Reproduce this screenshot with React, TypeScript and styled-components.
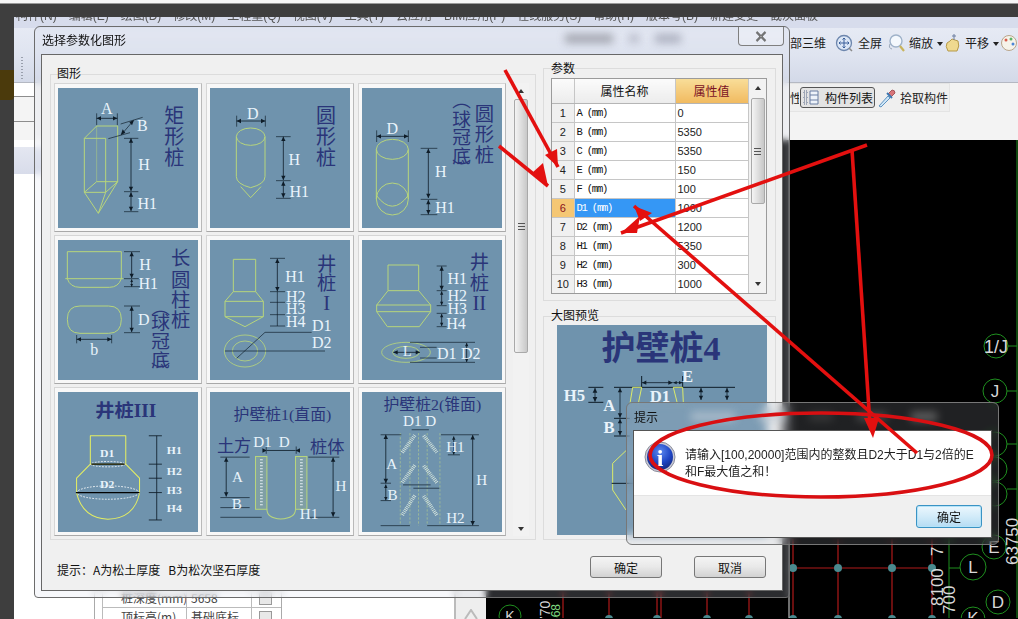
import React from "react";
import styled, { createGlobalStyle } from "styled-components";

const UI = `"Liberation Sans", "Noto Sans CJK SC", sans-serif`;
const CJK = `"Noto Sans CJK SC", sans-serif`;
const SERIF = `"Liberation Serif", "Noto Sans CJK SC", serif`;
const LINE = "#b7d57c";
const DIM = "#0e1c28";
const LABEL = "#e9f3fb";
const INK = "#2a3579";

const Global = createGlobalStyle`
  html, body { margin: 0; padding: 0; background: #3e3e3e; }
  body { font: 12px ${UI}; color: #111; }
  * { box-sizing: border-box; }
`;

const Page = styled.div`position: relative; width: 1018px; height: 619px; overflow: hidden; background: #3e3e3e;`;
const TopStrip = styled.div`height: 4px; background: #f6f6f6; border-bottom: 1px solid #999;`;
const Badge = styled.div`position: absolute; left: 0; top: 70px; width: 14px; height: 30px; background: #4b3a0c; border-radius: 0 0 4px 0;`;

const AppWindow = styled.div`position: absolute; left: 14px; top: 17px; width: 1004px; height: 602px; display: flex; flex-direction: column; background: #f0f0f0;`;
const MenuBar = styled.div`height: 11px; overflow: hidden; background: #d7dcec; display: flex; gap: 12px; padding-left: 2px; flex: none;`;
const MenuItem = styled.span`line-height: 18px; margin-top: -10px; color: #555; white-space: nowrap; filter: blur(0.5px);`;
const Ribbon = styled.div`height: 55px; flex: none; display: flex; align-items: flex-start; padding: 5px 0 0 7px; background: linear-gradient(#e6eaf4, #dfe4f0 50%, #d3d9e8); border-bottom: 1px solid #b4b8c2;`;
const RibbonGrip = styled.span`width: 2px; height: 24px; margin: 24px 767px 0 0; flex: none; background: repeating-linear-gradient(#9aa0ad 0 1px, transparent 1px 3px);`;
const RibbonText = styled.span<{ $gap?: number }>`font-size: 12px; line-height: 20px; color: #1b1b1b; white-space: nowrap; font-family: ${CJK}; margin-left: ${(p) => p.$gap ?? 0}px;`;
const RibbonDivider = styled.span`width: 1px; height: 20px; background: #888; margin: 0 2px 0 7px;`;
const RibbonIcon = styled.span<{ $gap?: number }>`width: 20px; height: 20px; flex: none; display: flex; align-items: center; justify-content: center; margin-left: ${(p) => p.$gap ?? 0}px;`;
const Caret = styled.span`width: 0; height: 0; flex: none; border: 3.5px solid transparent; border-top: 4px solid #222; margin: 9px 0 0 4px;`;

const SubBar = styled.div`height: 57px; flex: none; background: #f3f3f3; display: flex; align-items: flex-start; justify-content: space-between;`;
const SideCap = styled.div`width: 20px; display: flex; flex-direction: column;`;
const SideRow = styled.div<{ $h: number }>`height: ${(p) => p.$h}px; border-bottom: 1px solid #8d8d8d; background: ${(p) => (p.$h < 20 ? "#fff" : "#f4f4f4")};`;
const ToolGroup = styled.div`height: 29px; width: 160px; margin-right: 68px; display: flex; align-items: center; background: #efefef; border: 1px solid #e4e4e4; border-left: 0;`;
const ClippedChar = styled.span`width: 9px; overflow: hidden; flex: none; font-size: 12px; font-family: ${CJK}; color: #222;`;
const PressedTool = styled.div`width: 75px; height: 21px; flex: none; margin-left: 1px; display: flex; align-items: center; gap: 5px; padding-left: 2px; border: 1px solid #555; border-radius: 3px; background: #e3e3e3; font-size: 12px; font-family: ${CJK}; white-space: nowrap;`;
const GroupText = styled.span`font-size: 12px; font-family: ${CJK}; white-space: nowrap; color: #222; margin-left: 3px;`;

const Workspace = styled.div`flex: 1; display: flex; min-height: 0;`;
const LeftPanel = styled.div`width: 472px; display: flex; background: linear-gradient(#e4e7f1, #d8dcea) no-repeat 0 7px / 100% 27px, #fff; justify-content: flex-end; align-items: flex-end; overflow: hidden;`;
const PropTable = styled.div`width: 188px; margin-right: 172px; border: 1px solid #aaa; border-bottom: 0; padding-left: 7px; display: grid; grid-template-columns: 84px 65px 30px; grid-auto-rows: 19px; margin-bottom: -8px; background: #fff;`;
const PropCell = styled.div`border-left: 1px solid #bbb; border-bottom: 1px solid #bbb; font-size: 12px; font-family: ${CJK}; padding-left: 4px; line-height: 18px; white-space: nowrap; overflow: hidden; color: #444;`;
const PropLabel = styled(PropCell)`padding-left: 18px;`;
const Check = styled.span`display: block; width: 13px; height: 13px; margin: 3px 3px; border: 1px solid #999; background: #e8e8e8;`;
const GreyStrip = styled.div`width: 32px; height: 100%; background: #eee; border-left: 2px solid #bbb; display: flex; align-items: flex-end; justify-content: center;`;
const Cad = styled.div`flex: 1; background: #000; overflow: hidden;`;

const Dialog = styled.div`position: absolute; left: 34px; top: 26px; width: 756px; height: 572px; display: flex; flex-direction: column; padding: 0 6px 6px 6px; border: 1px solid #6c6c6c; border-radius: 6px 6px 4px 4px; background: rgba(215, 220, 236, 0.2); backdrop-filter: blur(3px);`;
const TitleBar = styled.div`height: 27px; flex: none; display: flex; align-items: flex-start; font-family: ${CJK}; font-size: 12px; color: #111;`;
const TitleText = styled.span`line-height: 26px; margin-left: 1px;`;
const TitleBlurs = styled.div`display: flex; gap: 16px; margin: 7px 0 0 439px; align-items: center;`;
const Blur = styled.span<{ $w: number; $c: string }>`display: block; flex: none; width: ${(p) => p.$w}px; height: 9px; background: ${(p) => p.$c}; filter: blur(4px); opacity: 0.75;`;
const CloseBtn = styled.div`margin-left: auto; margin-right: -1px; width: 46px; height: 19px; border: 1px solid #7f7f7f; border-top: 0; border-radius: 0 0 4px 4px; display: flex; align-items: center; justify-content: center; background: rgba(255,255,255,.25);`;
const Panel = styled.div`flex: 1; background: #f0f0f0; border: 1px solid #676767; display: flex; flex-direction: column; padding: 19px 0 0 8px;`;
const PanelBody = styled.div`display: flex; gap: 7px; height: 466px;`;
const Group = styled.div<{ $w?: number; $pl: number; $grow?: boolean }>`width: ${(p) => p.$w ?? 233}px; border: 1px solid #dcdcdc; padding-left: ${(p) => p.$pl}px; ${(p) => (p.$grow ? "flex: 1;" : "padding-bottom: 6px;")}`;
const Legend = styled.div<{ $mb: number; $mt: number; $ml?: number }>`font-family: ${CJK}; font-size: 12px; line-height: 16px; height: 16px; margin: ${(p) => p.$mt}px 0 ${(p) => p.$mb}px ${(p) => p.$ml ?? 0}px; color: #111;`;
const GalleryRow = styled.div`display: flex; gap: 7px;`;
const Gallery = styled.div`display: grid; grid-template-columns: repeat(3, 148px); grid-auto-rows: 149px; gap: 3px 4px; width: 452px;`;
const Cell = styled.div`padding: 4px; background: #f8f8f8; border: 1px solid #d6d6d6; border-bottom-color: #a9a9a9; border-right-color: #b9b9b9; display: flex; align-items: center; justify-content: center;`;
const Art = styled.svg.attrs({ preserveAspectRatio: "none" })<{ $size: number }>`display: block; width: ${(p) => p.$size}px; height: ${(p) => p.$size}px; background: #6f93ad; flex: none;`;

const VScroll = styled.div<{ $w: number; $thumbTop: number; $thumbH: number }>`
  width: ${(p) => p.$w}px; flex: none; display: flex; flex-direction: column; align-items: center; background: #f2f2f2;
  .up, .down { height: ${(p) => p.$thumbTop}px; flex: none; display: flex; align-items: center; justify-content: center; }
  .track { flex: 1; }
  .thumb { height: ${(p) => p.$thumbH}px; width: 14px; border: 1px solid #a9a9a9; border-radius: 2px; background: linear-gradient(90deg, #f4f4f4, #dcdcdc 55%, #c8c8c8); display: flex; align-items: center; justify-content: center; }
`;
const Grip = styled.span`display: block; width: 7px; height: 7px; background: repeating-linear-gradient(#555 0 1px, transparent 1px 3px);`;
const Tri = styled.span<{ $down?: boolean }>`width: 0; height: 0; border: 3.5px solid transparent; ${(p) => (p.$down ? "border-top: 4px solid #333; margin-top: 4px;" : "border-bottom: 4px solid #333; margin-bottom: 4px;")}`;

const RightCol = styled.div`display: flex; flex-direction: column; gap: 15px; margin-top: -6px;`;
const ParamWrap = styled.div`width: 216px; height: 216px; border: 1px solid #9b9b9b; display: flex; overflow: hidden; background: #fff;`;
const ParamTable = styled.table`width: 196px; flex: none; border-collapse: collapse; table-layout: fixed;`;
const HeadCell = styled.th<{ $hot?: boolean; $w: number }>`
  width: ${(p) => p.$w}px; height: 24px; padding: 0; font: 400 12px ${CJK}; border-right: 1px solid #c6c6c6; border-bottom: 1px solid #b5b5b5;
  color: ${(p) => (p.$hot ? "#7a1124" : "#111")};
  background: ${(p) => (p.$hot ? "linear-gradient(#f8dd98, #f1ba60)" : "linear-gradient(#fbfbfb, #ececec)")};
`;
const IndexCell = styled.td<{ $on?: boolean }>`height: 19px; padding: 0; text-align: center; font: 11px "Liberation Sans", sans-serif; border-right: 1px solid #c6c6c6; border-bottom: 1px solid #c6c6c6; color: ${(p) => (p.$on ? "#8a1020" : "#222")}; background: ${(p) => (p.$on ? "#f5c774" : "#f0f0f0")};`;
const NameCell = styled.td<{ $on?: boolean }>`height: 19px; padding: 0 0 0 2px; font: 10.5px "Liberation Mono", monospace; letter-spacing: -1.2px; white-space: nowrap; border-right: 1px solid #c6c6c6; border-bottom: 1px solid #c6c6c6; color: ${(p) => (p.$on ? "#fff" : "#111")}; background: ${(p) => (p.$on ? "#3597f5" : "#fff")};`;
const ValueCell = styled.td`height: 19px; padding: 0 0 0 2px; font: 11px "Liberation Sans", sans-serif; border-right: 1px solid #c6c6c6; border-bottom: 1px solid #c6c6c6; color: #222;`;

const Footer = styled.div`display: flex; align-items: center; height: 22px; margin-top: 16px; padding: 0 16px 0 7px;`;
const Hint = styled.span`font-family: ${CJK}; font-size: 12px; white-space: pre; flex: 1; margin-top: 4px; color: #111;`;
const PushBtn = styled.div`width: 72px; height: 22px; margin-left: 32px; border: 1px solid #777; border-radius: 3px; background: linear-gradient(#f4f4f4, #e9e9e9 48%, #d2d2d2); display: flex; align-items: center; justify-content: center; font-family: ${CJK}; font-size: 12px; color: #111;`;

const MsgBox = styled.div`position: absolute; left: 626px; top: 402px; width: 373px; height: 143px; display: flex; flex-direction: column; padding: 0 6px 6px; border: 1px solid #777; border-radius: 6px; background: rgba(200, 205, 215, 0.16); backdrop-filter: blur(5px);`;
const MsgTitle = styled.div`height: 27px; flex: none; padding-left: 1px; display: flex; align-items: center; font-family: ${CJK}; font-size: 12px; color: #111;`;
const MsgBlurs = styled.div`display: flex; margin-left: 33px; gap: 24px; align-items: center;`;
const MsgInner = styled.div`flex: 1; border: 1px solid #555; display: flex; flex-direction: column; background: #f0f0f0;`;
const MsgContent = styled.div`height: 65px; flex: none; background: #fff; border-bottom: 1px solid #e4e4e4; display: flex; padding: 10px 12px 0 10px; gap: 9px;`;
const MsgText = styled.div`font-family: ${UI}; font-size: 12px; line-height: 17px; padding-top: 6px; color: #222; white-space: nowrap;`;
const MsgFooter = styled.div`flex: 1; display: flex; justify-content: flex-end; align-items: flex-start; padding: 9px 9px 0 0;`;
const OkBtn = styled.div`width: 66px; height: 23px; border: 1px solid #3a93c4; border-radius: 3px; box-shadow: inset 0 0 0 1px #b5e3f8; background: linear-gradient(#ecf7fd, #d2ebf9 50%, #b5dcf3); display: flex; align-items: center; justify-content: center; font-family: ${CJK}; font-size: 12px;`;
const Overlay = styled.svg`position: absolute; left: 0; top: 0; width: 1018px; height: 619px; pointer-events: none;`;
const CadSvg = styled.svg`display: block;`;
const InfoSvg = styled.svg`flex: none;`;

/* ---------- drawing helpers ---------- */
type DimP = { x1: number; y1: number; x2: number; y2: number; s?: number; inward?: boolean };
const Dim = ({ x1, y1, x2, y2, s = 13, inward }: DimP) => {
  const vert = x1 === x2;
  const w = s * 0.5;
  const head = (x: number, y: number, dir: number) =>
    vert
      ? `${x},${y} ${x - w},${y + dir * s} ${x + w},${y + dir * s}`
      : `${x},${y} ${x + dir * s},${y - w} ${x + dir * s},${y + w}`;
  const d = inward ? -1 : 1;
  return (
    <g>
      <line x1={x1} y1={y1} x2={x2} y2={y2} stroke={DIM} strokeWidth={2.4} />
      <polygon points={head(x1, y1, d)} fill={DIM} />
      <polygon points={head(x2, y2, -d)} fill={DIM} />
    </g>
  );
};
const Ticks = ({ d, c = DIM, w = 2 }: { d: string; c?: string; w?: number }) => <path d={d} stroke={c} strokeWidth={w} fill="none" />;
const Green = ({ d, c = LINE, w = 3, dash }: { d: string; c?: string; w?: number; dash?: string }) => <path d={d} stroke={c} strokeWidth={w} strokeDasharray={dash} fill="none" strokeLinejoin="round" />;
const L = ({ x, y, t, s = 48, bold }: { x: number; y: number; t: string; s?: number; bold?: boolean }) => (
  <text x={x} y={y} fontSize={s} fontFamily={SERIF} fill={LABEL} textAnchor="middle" fontWeight={bold ? 700 : 400}>{t}</text>
);
const V = ({ x, ys, chars, s = 60 }: { x: number; ys: number[]; chars: string[]; s?: number }) => (
  <g>
    {chars.map((c, i) => (
      <text key={i} x={x} y={ys[i]} fontSize={s} fontFamily={CJK} fontWeight={400} fill={INK} textAnchor="middle">{c}</text>
    ))}
  </g>
);
const H = ({ x, y, t, s = 48, bold }: { x: number; y: number; t: string; s?: number; bold?: boolean }) => (
  <text x={x} y={y} fontSize={s} fontFamily={SERIF} fontWeight={bold ? 700 : 400} fill={INK} textAnchor="middle">{t}</text>
);

const Pile1 = () => (
  <Art $size={140} viewBox="174 264 420 420">
    <Green d="M253 415H317V577H253ZM253 415L290 378H353V545L317 577M253 577L295 640L317 577M353 545L295 640M253 577L290 545H353" />
    <Green d="M290 378V545" w={1.5} />
    <Ticks d="M290 340V375M352 340V375M362 372L428 352M325 416L390 398M372 415H415M372 575H415M372 635H415" />
    <Dim x1={290} y1={355} x2={352} y2={355} />
    <line x1={400} y1={362} x2={365} y2={403} stroke={DIM} strokeWidth={2} />
    <polygon points="402,360 388,366 396,376" fill={DIM} />
    <polygon points="362,406 376,398 368,388" fill={DIM} />
    <Dim x1={393} y1={415} x2={393} y2={573} />
    <Dim x1={393} y1={577} x2={393} y2={633} />
    <L x={320} y={342} t="A" /><L x={427} y={394} t="B" /><L x={432} y={510} t="H" /><L x={442} y={627} t="H1" />
    <V x={523} ys={[368, 432, 496]} chars={["矩", "形", "桩"]} />
  </Art>
);
const Pile2 = () => (
  <Art $size={140} viewBox="630 264 420 420">
    <ellipse cx={752} cy={410} rx={43} ry={26} fill="none" stroke={LINE} strokeWidth={3} />
    <Green d="M709 410V530Q709 552 752 563Q795 552 795 530V410M722 560L752 593L783 560" />
    <Ticks d="M710 347V380M796 347V380M828 410H872M828 542H872M828 595H872" />
    <Dim x1={710} y1={363} x2={796} y2={363} />
    <Dim x1={850} y1={410} x2={850} y2={540} />
    <Dim x1={850} y1={544} x2={850} y2={593} />
    <L x={758} y={356} t="D" /><L x={883} y={494} t="H" /><L x={898} y={591} t="H1" />
    <V x={978} ys={[368, 432, 496]} chars={["圆", "形", "桩"]} />
  </Art>
);
const Pile3 = () => (
  <Art $size={140} viewBox="36 83 420 420">
    <ellipse cx={127} cy={267} rx={48} ry={30} fill="none" stroke={LINE} strokeWidth={3} />
    <ellipse cx={127} cy={416} rx={48} ry={48} fill="none" stroke={LINE} strokeWidth={3} />
    <Green d="M79 267V416M175 267V416M79 405Q127 470 175 405" />
    <Ticks d="M80 210V245M175 210V245M212 264H262M212 417H262M212 463H262" />
    <Dim x1={80} y1={228} x2={175} y2={228} />
    <Dim x1={235} y1={265} x2={235} y2={413} />
    <Dim x1={235} y1={419} x2={235} y2={462} />
    <L x={127} y={220} t="D" /><L x={272} y={351} t="H" /><L x={285} y={458} t="H1" />
    <V x={403} ys={[182, 243, 305]} chars={["圆", "形", "桩"]} s={58} />
    <V x={335} ys={[140, 198, 252, 308, 345]} chars={["︵", "球", "冠", "底", "︶"]} s={56} />
  </Art>
);
const Pile4 = () => (
  <Art $size={140} viewBox="24 30 420 420">
    <Green d="M52 65H214V146Q205 172 178 172H90Q60 172 52 146ZM46 146H220M90 228H176Q214 228 214 268Q214 310 176 310H90Q52 310 52 268Q52 228 90 228Z" />
    <Ticks d="M222 65H270M222 146H270M222 170H270M222 228H270M222 308H270M80 315V340M185 315V340" />
    <Dim x1={245} y1={66} x2={245} y2={144} />
    <Dim x1={245} y1={148} x2={245} y2={170} s={8} />
    <Dim x1={245} y1={229} x2={245} y2={306} />
    <Dim x1={80} y1={328} x2={185} y2={328} />
    <L x={285} y={121} t="H" /><L x={295} y={177} t="H1" /><L x={281} y={284} t="D" /><L x={133} y={374} t="b" />
    <V x={392} ys={[106, 170, 232, 292]} chars={["长", "圆", "柱", "桩"]} s={58} />
    <V x={332} ys={[252, 296, 354, 412, 445]} chars={["︵", "球", "冠", "底", "︶"]} s={56} />
  </Art>
);
const Pile5 = () => (
  <Art $size={140} viewBox="480 30 420 420">
    <Green d="M550 88H617V185H550ZM550 185L525 214V260L585 290L640 260V214L617 185M525 214H640M525 260H640" />
    <ellipse cx={585} cy={363} rx={62} ry={48} fill="none" stroke={LINE} strokeWidth={2.5} />
    <ellipse cx={585} cy={363} rx={38} ry={30} fill="none" stroke={LINE} strokeWidth={2.5} />
    <Ticks d="M560 385L645 307H785M525 363H825M660 85H705M660 185H705M660 217H705M660 254H705M660 288H705M682 185V288" />
    <Dim x1={682} y1={86} x2={682} y2={184} />
    <L x={735} y={156} t="H1" /><L x={737} y={216} t="H2" /><L x={737} y={253} t="H3" /><L x={737} y={291} t="H4" /><L x={815} y={304} t="D1" /><L x={815} y={354} t="D2" />
    <V x={830} ys={[122, 180]} chars={["井", "桩"]} s={58} />
    <H x={830} y={240} t="I" s={62} />
  </Art>
);
const Pile6 = () => (
  <Art $size={140} viewBox="936 30 420 420">
    <Green d="M1014 105H1106V182H1014ZM1014 182L980 225V245L1012 290H1108L1142 245V225L1106 182M980 225H1142M980 245H1142" />
    <ellipse cx={1068} cy={367} rx={73} ry={30} fill="none" stroke={LINE} strokeWidth={2.5} />
    <ellipse cx={1068} cy={367} rx={40} ry={18} fill="none" stroke={LINE} strokeWidth={2.5} />
    <Ticks d="M1160 108H1190M1160 182H1190M1160 227H1190M1160 250H1190M1160 290H1190M1080 337H1275M1080 397H1275M1110 352H1160M1110 384H1160" />
    <Dim x1={1175} y1={109} x2={1175} y2={180} />
    <Dim x1={1175} y1={184} x2={1175} y2={225} s={10} />
    <Dim x1={1175} y1={252} x2={1175} y2={288} s={10} />
    <Dim x1={1030} y1={367} x2={1110} y2={367} />
    <Dim x1={1250} y1={339} x2={1250} y2={396} s={10} />
    <L x={1222} y={162} t="H1" /><L x={1222} y={213} t="H2" /><L x={1222} y={251} t="H3" /><L x={1218} y={296} t="H4" /><L x={1072} y={377} t="L" s={42} /><L x={1190} y={386} t="D1" /><L x={1262} y={386} t="D2" />
    <V x={1288} ys={[118, 180]} chars={["井", "桩"]} s={58} />
    <H x={1288} y={240} t="II" s={62} />
  </Art>
);
const Pile7 = () => (
  <Art $size={140} viewBox="168 37 407 419">
    <Green c="#e4ee62" d="M262 168H365V253H262ZM262 253L222 295V340Q240 415 313 418Q390 415 405 340V295L365 253" />
    <ellipse cx={313} cy={253} rx={50} ry={8} fill="none" stroke="#fff" strokeWidth={2.5} strokeDasharray="5 4" />
    <ellipse cx={313} cy={338} rx={90} ry={20} fill="none" stroke="#fff" strokeWidth={2.5} strokeDasharray="5 4" />
    <line x1={265} y1={253} x2={362} y2={253} stroke="#000" strokeWidth={4} />
    <line x1={220} y1={338} x2={405} y2={338} stroke="#000" strokeWidth={4} />
    <Ticks d="M455 168V420M432 168H470M432 253H470M432 295H470M432 338H470M432 420H470" w={2.5} />
    <L x={311} y={233} t="D1" s={34} bold /><L x={311} y={323} t="D2" s={34} bold />
    <L x={506} y={224} t="H1" s={34} bold /><L x={506} y={286} t="H2" s={34} bold /><L x={506} y={341} t="H3" s={34} bold /><L x={506} y={397} t="H4" s={34} bold />
    <text x={365} y={113} fontSize={56} fontFamily={SERIF} fontWeight={700} fill={INK} textAnchor="middle">井桩III</text>
  </Art>
);
const Dots = ({ x }: { x: number }) => (
  <g>
    <rect x={x} y={230} width={33} height={158} fill="#7f9fa5" stroke={LINE} strokeWidth={3} />
    <line x1={x + 17} y1={238} x2={x + 17} y2={382} stroke="#e4eef2" strokeWidth={8} strokeDasharray="3 6" />
  </g>
);
const Pile8 = () => (
  <Art $size={140} viewBox="610 37 406 419">
    <H x={820} y={120} t="护壁桩1(直面)" s={46} />
    <H x={680} y={216} t="土方" s={50} /><H x={950} y={220} t="桩体" s={50} />
    <Dots x={742} /><Dots x={858} />
    <Green d="M775 388Q775 415 815 417Q858 415 858 388" />
    <Ticks d="M640 232H725M640 353H725M640 383H725M640 412H760M895 232H985M900 412H985M773 200V222M860 200V222" />
    <Dim x1={775} y1={212} x2={858} y2={212} inward />
    <Dim x1={657} y1={233} x2={657} y2={350} />
    <Dim x1={967} y1={233} x2={967} y2={410} />
    <L x={762} y={201} t="D1" s={44} /><L x={825} y={201} t="D" s={44} /><L x={690} y={306} t="A" s={44} /><L x={688} y={388} t="B" s={44} /><L x={990} y={334} t="H" s={44} /><L x={897} y={416} t="H1" s={44} />
  </Art>
);
const Pile9 = () => (
  <Art $size={140} viewBox="1051 37 406 419">
    <H x={1255} y={92} t="护壁桩2(锥面)" s={46} />
    <Green c="#c4dc88" w={1.5} dash="7 5" d="M1162 160V437M1190 160V437M1215 160V437M1240 160V437M1277 160V437" />
    <Green c="#d5e4dc" w={11} dash="2.5 3" d="M1168 218L1205 165M1268 218L1228 165M1168 308L1205 255M1268 308L1228 255M1168 405L1205 345M1268 405L1228 345" />
    <Ticks d="M1105 165H1165M1105 310H1135M1105 362H1135M1105 437H1190M1280 165H1390M1240 437H1390M1195 150H1245M1170 315H1250M1200 325H1275M1300 225H1335" />
    <Dim x1={1120} y1={165} x2={1120} y2={310} />
    <Dim x1={1120} y1={314} x2={1120} y2={361} s={10} />
    <Dim x1={1372} y1={166} x2={1372} y2={436} />
    <Dim x1={1317} y1={170} x2={1317} y2={224} s={10} />
    <L x={1218} y={140} t="D1 D" s={44} /><L x={1137} y={266} t="A" s={44} /><L x={1140} y={361} t="B" s={44} /><L x={1322} y={216} t="H1" s={44} /><L x={1398} y={314} t="H" s={44} /><L x={1322} y={428} t="H2" s={44} />
  </Art>
);
const Preview = () => (
  <Art $size={210} viewBox="51 75 630 630">
    <text x={363} y={180} fontSize={102} fontFamily={SERIF} fontWeight={700} fill={INK} textAnchor="middle">护壁桩4</text>
    <Ticks d="M222 262H585M145 262H190M145 307H190M305 228V262M428 228V262M222 355H270M222 408H270" w={3} />
    <Dim x1={306} y1={248} x2={398} y2={248} />
    <Dim x1={400} y1={248} x2={427} y2={248} s={10} />
    <Dim x1={165} y1={264} x2={165} y2={305} s={14} />
    <Dim x1={240} y1={264} x2={240} y2={353} />
    <Dim x1={240} y1={357} x2={240} y2={406} />
    <Dim x1={483} y1={264} x2={483} y2={300} />
    <Dim x1={561} y1={264} x2={561} y2={300} />
    <Green c="#dceb6a" d="M278 262H305L295 310M428 262H400L412 310M428 262L430 310M278 262L270 310M218 490L258 452M218 490V570L258 630" />
    <Ticks d="M215 550H290" w={3} />
    <L x={103} y={304} t="H5" s={50} bold /><L x={208} y={333} t="A" s={50} bold /><L x={207} y={399} t="B" s={50} bold /><L x={360} y={305} t="D1" s={50} bold /><L x={443} y={246} t="E" s={50} bold />
  </Art>
);

const MoveIcon = () => (
  <svg width="20" height="20" viewBox="0 0 20 20">
    <circle cx="9" cy="10" r="7.5" fill="#dbe6f6" stroke="#6d86ad" strokeWidth="1.3" />
    <path d="M9 5V15M4 10H14M7.5 6.5L9 5L10.5 6.5M7.5 13.5L9 15L10.5 13.5M5.5 8.5L4 10L5.5 11.5M12.5 8.5L14 10L12.5 11.5" stroke="#3a5f9a" fill="none" />
    <path d="M14 15L17 18" stroke="#8a8a8a" strokeWidth="1.5" />
  </svg>
);
const ZoomIcon = () => (
  <svg width="20" height="20" viewBox="0 0 20 20">
    <circle cx="9" cy="8" r="6" fill="#f4f8fd" stroke="#9fb2c9" strokeWidth="1.4" />
    <path d="M13 13L17 18" stroke="#c9b45c" strokeWidth="2.2" />
    <path d="M3 11Q1 15 5 16" stroke="#9aa7b8" fill="none" />
  </svg>
);
const HandIcon = () => (
  <svg width="20" height="20" viewBox="0 0 20 20">
    <path d="M5 18Q2 13 4 10L7 8L9 6L15 8Q17 13 14 18Z" fill="#efd98f" stroke="#b59a4b" />
    <path d="M11 1V7M9 3H13" stroke="#6d7ea0" fill="none" />
  </svg>
);
const PaletteIcon = () => (
  <svg width="20" height="20" viewBox="0 0 20 20">
    <circle cx="10" cy="10" r="7.5" fill="#f6f3ea" stroke="#b9a58a" />
    <circle cx="7" cy="7" r="1.5" fill="#d85a4a" /><circle cx="12" cy="6" r="1.5" fill="#5ab36a" /><circle cx="14" cy="11" r="1.5" fill="#4a86d8" />
  </svg>
);
const ListIcon = () => (
  <svg width="17" height="15" viewBox="0 0 17 15">
    <path d="M1 1H4V4H1ZM1 6H4V9H1ZM1 11H4V14H1Z" fill="none" stroke="#5a6b8a" strokeDasharray="1 1" />
    <path d="M7 1H15V14H7ZM7 5H15M7 10H15" fill="#eef3fa" stroke="#6a7fa3" />
  </svg>
);
const PickIcon = () => (
  <svg width="20" height="20" viewBox="0 0 20 20">
    <path d="M2 18L11 8L13 10L4 19Z" fill="#cfe6f6" stroke="#5e93c2" />
    <path d="M11 6L15 2Q18 2 18 5L14 9Z" fill="#d9757a" stroke="#a4555a" />
    <path d="M10 5L15 10" stroke="#3d78b0" strokeWidth="2" />
  </svg>
);
const CloseGlyph = () => (
  <svg width="12" height="11" viewBox="0 0 12 11">
    <path d="M1.5 1L10.5 10M10.5 1L1.5 10" stroke="#333" strokeWidth="2" fill="none" />
    <path d="M1.5 1L10.5 10M10.5 1L1.5 10" stroke="#eee" strokeWidth=".7" fill="none" />
  </svg>
);
const InfoIcon = () => (
  <InfoSvg width="32" height="32" viewBox="0 0 32 32">
    <defs>
      <radialGradient id="ib" cx="50%" cy="30%" r="70%">
        <stop offset="0" stopColor="#5c8af0" />
        <stop offset=".6" stopColor="#1e45c4" />
        <stop offset="1" stopColor="#16297f" />
      </radialGradient>
    </defs>
    <circle cx="16" cy="16" r="15" fill="#c9cbd6" stroke="#8b8d9c" />
    <circle cx="16" cy="16" r="13" fill="url(#ib)" />
    <text x="16" y="25" fontSize="24" fontWeight="700" fontFamily={SERIF} fill="#fff" textAnchor="middle">i</text>
  </InfoSvg>
);

const CadText = ({ x, y, t, s = 18, c = "#d8d8d8", r }: { x: number; y: number; t: string; s?: number; c?: string; r?: boolean }) => (
  <text x={x} y={y} fontSize={s} fill={c} fontFamily={`"Liberation Sans", sans-serif`} textAnchor={r ? "start" : "middle"} transform={r ? `rotate(-90 ${x} ${y})` : undefined}>{t}</text>
);
const CadDrawing = () => {
  const xs = [563, 609, 657, 661, 707, 749];
  const upper = [793, 838, 892, 932];
  return (
    <CadSvg width="532" height="478" viewBox="486 141 532 478">
      {xs.map((x) => <line key={x} x1={x} y1={590} x2={x} y2={619} stroke="#b01a1a" strokeWidth={1.2} />)}
      {upper.map((x) => <line key={x} x1={x} y1={540} x2={x} y2={619} stroke="#b01a1a" strokeWidth={1.2} />)}
      <line x1={793} y1={569} x2={932} y2={569} stroke="#b01a1a" strokeWidth={1.2} />
      {upper.map((x) => <circle key={x} cx={x} cy={569} r={4} fill="#4b8a8f" />)}
      {[609, 657, 707, 749, ...upper].map((x) => <circle key={x} cx={x} cy={620} r={4} fill="#4b8a8f" />)}
      <line x1={789} y1={141} x2={789} y2={619} stroke="#ddd" />
      <path d="M949 500V619M1017 141V619M949 569H960" stroke="#1f8f1f" strokeWidth={1} fill="none" />
      <path d="M1008 347H1017M1007 392H1017M1007 445H1017M1007 490H1017" stroke="#1f8f1f" fill="none" />
      {[[996, 347, 12], [995, 392, 12], [995, 445, 12], [995, 470, 12], [995, 495, 12], [994, 548, 12], [973, 568, 13], [998, 603, 12], [973, 620, 12], [510, 617, 11]].map(([x, y, r], i) => (
        <circle key={i} cx={x} cy={y} r={r} fill="none" stroke="#1f8f1f" />
      ))}
      <CadText x={996} y={354} t="1/J" s={18} />
      <CadText x={995} y={398} t="J" s={17} />
      <CadText x={973} y={574} t="L" s={17} />
      <CadText x={998} y={609} t="D" s={17} />
      <CadText x={973} y={625} t="K" s={17} />
      <CadText x={510} y={622} t="K" s={14} />
      <CadText x={994} y={554} t="E" s={17} />
      <CadText x={1018} y={566} t="63750" s={17} r />
      <CadText x={943} y={557} t="7" s={17} r />
      <CadText x={943} y={607} t="8100" s={17} r />
      <CadText x={955} y={615} t="700" s={17} r />
      <CadText x={550} y={625} t="770" s={14} r />
      <CadText x={560} y={625} t="568" s={12} r c="#7fd77f" />
    </CadSvg>
  );
};

const PARAMS: [string, string][] = [
  ["A (mm)", "0"], ["B (mm)", "5350"], ["C (mm)", "5350"], ["E (mm)", "150"], ["F (mm)", "100"],
  ["D1 (mm)", "1000"], ["D2 (mm)", "1200"], ["H1 (mm)", "5350"], ["H2 (mm)", "300"], ["H3 (mm)", "1000"],
];
const MENU = ["构件(N)", "编辑(E)", "绘图(D)", "修改(M)", "工程量(Q)", "视图(V)", "工具(T)", "云应用", "BIM应用(P)", "在线服务(S)", "帮助(H)", "版本号(B)", "新建变更", "截茨面板"];

const Arrow = ({ a, b, c, d, e, f, g, h }: Record<string, number>) => (
  <g>
    <line x1={a} y1={b} x2={c} y2={d} stroke="#e3100f" strokeWidth={3.6} />
    <polygon points={`${e},${f} ${g},${h} ${c},${d}`} fill="#e3100f" />
  </g>
);

export default function App() {
  return (
    <>
      <Global />
      <Page>
        <TopStrip />
        <Badge />
        <AppWindow>
          <MenuBar>{MENU.map((m) => <MenuItem key={m}>{m}</MenuItem>)}</MenuBar>
          <Ribbon>
            <RibbonGrip />
            <RibbonText>部三维</RibbonText>
            <RibbonDivider />
            <RibbonIcon><MoveIcon /></RibbonIcon>
            <RibbonText $gap={3}>全屏</RibbonText>
            <RibbonIcon $gap={5}><ZoomIcon /></RibbonIcon>
            <RibbonText $gap={2}>缩放</RibbonText>
            <Caret />
            <RibbonIcon><HandIcon /></RibbonIcon>
            <RibbonText $gap={2}>平移</RibbonText>
            <Caret />
            <RibbonIcon><PaletteIcon /></RibbonIcon>
          </Ribbon>
          <SubBar>
            <SideCap>
              <SideRow $h={14} /><SideRow $h={25} /><SideRow $h={22} />
            </SideCap>
            <ToolGroup>
              <ClippedChar>性</ClippedChar>
              <PressedTool><ListIcon />构件列表</PressedTool>
              <RibbonIcon $gap={2}><PickIcon /></RibbonIcon>
              <GroupText>拾取构件</GroupText>
            </ToolGroup>
          </SubBar>
          <Workspace>
            <LeftPanel>
              <PropTable>
                <PropLabel>桩深度(mm)</PropLabel><PropCell>5658</PropCell><PropCell><Check /></PropCell>
                <PropLabel>顶标高(m)</PropLabel><PropCell>基础底标</PropCell><PropCell><Check /></PropCell>
              </PropTable>
              <GreyStrip>
                <svg width="16" height="10" viewBox="0 0 16 10"><path d="M2 10L8 1L14 10" stroke="#bbb" strokeWidth="2" fill="none" /></svg>
              </GreyStrip>
            </LeftPanel>
            <Cad><CadDrawing /></Cad>
          </Workspace>
        </AppWindow>

        <Dialog>
          <TitleBar>
            <TitleText>选择参数化图形</TitleText>
            <TitleBlurs>
              <Blur $w={48} $c="#8d8f98" /><Blur $w={10} $c="#a9adbb" /><Blur $w={26} $c="#9a9eae" />
            </TitleBlurs>
            <CloseBtn><CloseGlyph /></CloseBtn>
          </TitleBar>
          <Panel>
            <PanelBody>
              <Group $w={486} $pl={3}>
                <Legend $mt={-10} $mb={2} $ml={3}>图形</Legend>
                <GalleryRow>
                  <Gallery>
                    <Cell><Pile1 /></Cell><Cell><Pile2 /></Cell><Cell><Pile3 /></Cell>
                    <Cell><Pile4 /></Cell><Cell><Pile5 /></Cell><Cell><Pile6 /></Cell>
                    <Cell><Pile7 /></Cell><Cell><Pile8 /></Cell><Cell><Pile9 /></Cell>
                  </Gallery>
                  <VScroll $w={16} $thumbTop={16} $thumbH={254}>
                    <div className="up"><Tri /></div>
                    <div className="thumb"><Grip /></div>
                    <div className="track" />
                    <div className="down"><Tri $down /></div>
                  </VScroll>
                </GalleryRow>
              </Group>
              <RightCol>
                <Group $pl={7}>
                  <Legend $mt={-9} $mb={2}>参数</Legend>
                  <ParamWrap>
                    <ParamTable>
                      <thead>
                        <tr>
                          <HeadCell $w={22} />
                          <HeadCell $w={101}>属性名称</HeadCell>
                          <HeadCell $w={73} $hot>属性值</HeadCell>
                        </tr>
                      </thead>
                      <tbody>
                        {PARAMS.map(([n, v], i) => (
                          <tr key={n}>
                            <IndexCell $on={i === 5}>{i + 1}</IndexCell>
                            <NameCell $on={i === 5}>{n}</NameCell>
                            <ValueCell>{v}</ValueCell>
                          </tr>
                        ))}
                      </tbody>
                    </ParamTable>
                    <VScroll $w={18} $thumbTop={19} $thumbH={106}>
                      <div className="up"><Tri /></div>
                      <div className="thumb"><Grip /></div>
                      <div className="track" />
                      <div className="down"><Tri $down /></div>
                    </VScroll>
                  </ParamWrap>
                </Group>
                <Group $pl={13} $grow>
                  <Legend $mt={-10} $mb={2} $ml={-6}>大图预览</Legend>
                  <Preview />
                </Group>
              </RightCol>
            </PanelBody>
            <Footer>
              <Hint>提示：A为松土厚度   B为松次坚石厚度</Hint>
              <PushBtn>确定</PushBtn>
              <PushBtn>取消</PushBtn>
            </Footer>
          </Panel>
        </Dialog>

        <MsgBox>
          <MsgTitle>
            提示
            <MsgBlurs>
              <Blur $w={44} $c="#b9c6d2" /><Blur $w={26} $c="#c4ccd4" /><Blur $w={24} $c="#3f3f3f" /><Blur $w={30} $c="#555" /><Blur $w={26} $c="#777" />
            </MsgBlurs>
          </MsgTitle>
          <MsgInner>
            <MsgContent>
              <InfoIcon />
              <MsgText>请输入[100,20000]范围内的整数且D2大于D1与2倍的E<br />和F最大值之和！</MsgText>
            </MsgContent>
            <MsgFooter><OkBtn>确定</OkBtn></MsgFooter>
          </MsgInner>
        </MsgBox>

        <Overlay viewBox="0 0 1018 619">
          <Arrow a={505} b={70} c={558} d={167} e={545} f={155} g={557} h={149} />
          <Arrow a={499} b={146} c={548} d={186} e={532} f={173} g={543} h={163} />
          <Arrow a={867} b={145} c={621} d={233} e={640} f={216} g={637} h={233} />
          <Arrow a={917} b={453} c={634} d={206} e={640} f={221} g={652} h={213} />
          <line x1={852} y1={150} x2={870} y2={425} stroke="#e3100f" strokeWidth={3.6} />
          <polygon points="864,418 879,418 873,438" fill="#e3100f" />
          <ellipse cx={821} cy={455} rx={171} ry={42} fill="none" stroke="#d90f12" strokeWidth={3.6} />
        </Overlay>
      </Page>
    </>
  );
}
